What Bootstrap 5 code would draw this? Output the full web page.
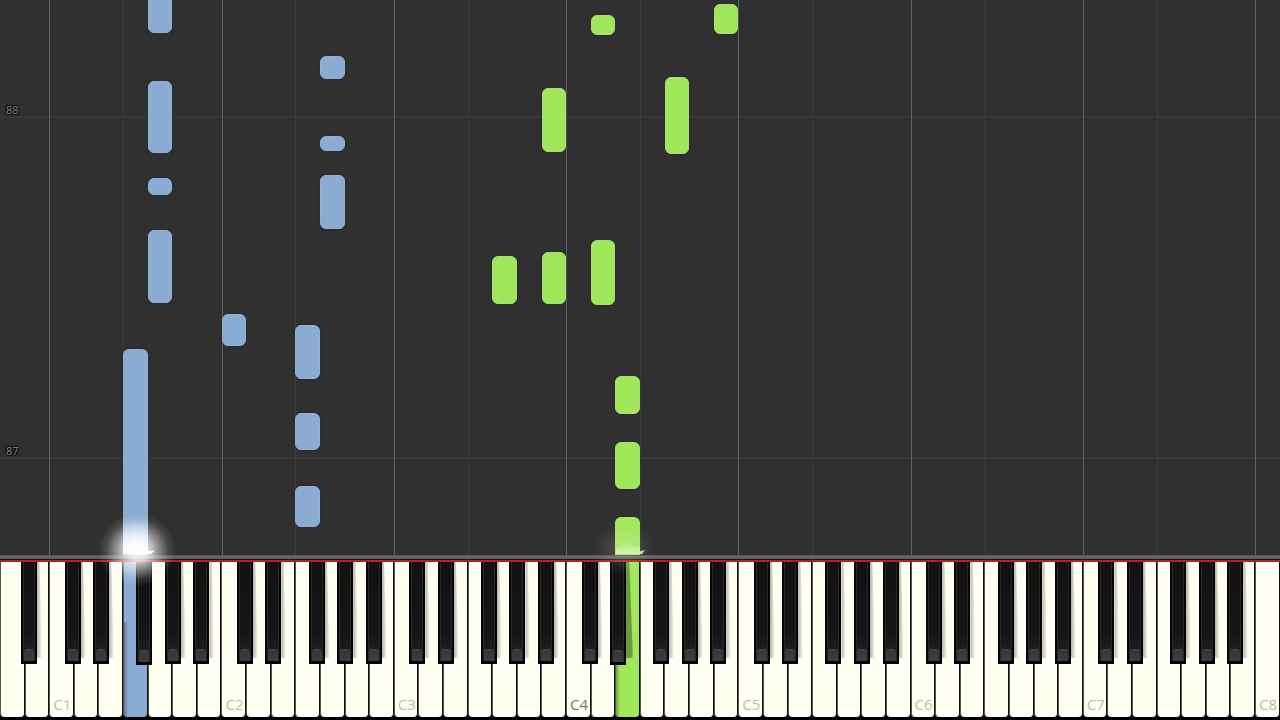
<!DOCTYPE html>
<html lang="en">
<head>
<meta charset="utf-8">
<meta name="viewport" content="width=device-width, initial-scale=1">
<title>Piano roll</title>
<link href="https://cdn.jsdelivr.net/npm/bootstrap@5.3.0/dist/css/bootstrap.min.css" rel="stylesheet">
<style>
  :root { --unit: calc(100% / 52); --left-hand: #8aabd2; --right-hand: #a1e75a; }
  body { background: #303030; font-family: "Open Sans", "Noto Sans", sans-serif; }
  .line-v { position: absolute; top: 0; bottom: 0; width: 1px; left: calc(var(--unit) * var(--key)); background: #3e3e3e; }
  .line-v.octave { background: #646464; }
  .line-h { position: absolute; left: 0; right: 0; height: 2px; bottom: calc(var(--at) * 1px); background: #383838; }
  .measure { position: absolute; left: 6px; bottom: 1px; font-size: 11px; line-height: 14px; color: #8c8c8c;
    text-shadow: 0 0 1px #000, 1px 1px 1px #000, -1px -1px 1px #000, 0 0 2px #000; }
  .note { position: absolute; left: calc(var(--unit) * var(--key)); width: var(--unit);
    bottom: calc(var(--at) * 1px); height: calc(var(--len) * 1px);
    border-radius: 6px; border: 1px solid #97b0cf; background: var(--left-hand); box-shadow: 0 0 2px #1c2430; }
  .note.right { background: var(--right-hand); border-color: #aadd78; box-shadow: 0 0 2px #1f2d14; }
  .note.playing { border-bottom: 0; border-bottom-left-radius: 0; border-bottom-right-radius: 0; }
  .rail { height: 7px; background: linear-gradient(#565656 0 1px, #686868 1px 3px, #555 3px 4px, #1c1c1c 4px 5px, #b81f22 5px 7px); z-index: 2; }
  .keyboard { height: 158px; background: #000; padding-bottom: 3px; }
  .white-key { flex: 1 1 0; border: 0; border-right: 1px solid #111; border-left: 1px solid #55554d;
    border-radius: 0 0 4px 4px; background: #fffff2; padding: 0 0 4px 3px; font-size: 15px; line-height: 17px;
    color: #bcbcb0; text-align: left; white-space: nowrap; min-width: 0; }
  .white-key.middle { color: #77776f; }
  .white-key.pressed-left { background: linear-gradient(90deg, #5f7691, transparent 4px) 0 60px no-repeat, var(--left-hand); }
  .white-key.pressed-right { background: linear-gradient(90deg, #6da03c, transparent 4px) 0 100px no-repeat, var(--right-hand); }
  .black-key { position: absolute; top: 0; height: 102px; width: 16px; margin-left: -8px; padding: 0; border: 0;
    left: calc(var(--unit) * var(--key)); background: #050505; }
  .black-key.low { height: 103px; }
  .black-key::before { content: ""; position: absolute; top: 0; bottom: 3px; left: 2px; right: 2px;
    border: solid #2a2925; border-width: 0 1px; background: linear-gradient(#121212, #151515 70%, #1e1e1e 88%, #2a2a2a); }
  .black-key::after { content: ""; position: absolute; left: 3px; right: 3px; bottom: 3px; height: 12px;
    border-radius: 3px 3px 1px 1px; background: linear-gradient(#444 0 1px, #363636 2px, #3e3e3e); }
  .cast { position: absolute; top: 0; height: 96px; width: 5px; margin-left: 8px; left: calc(var(--unit) * var(--key));
    background: linear-gradient(90deg, #b4b3af, #deded4 60%, transparent); clip-path: polygon(0 0, 50% 0, 100% 100%, 0 100%); }
  .cast.on-right { width: 7px; background: #6a993e; border-radius: 0 0 3px 0; }
  .glow { position: absolute; pointer-events: none; z-index: 3; left: calc(var(--unit) * var(--key)); }
  .glow svg { display: block; overflow: visible; }
</style>
</head>
<body>
<main class="vh-100 d-flex flex-column overflow-hidden position-relative">
  <section id="roll" class="flex-grow-1 position-relative overflow-hidden" aria-label="Notes"></section>
  <div class="rail position-relative"></div>
  <section class="keyboard position-relative" aria-label="Keyboard">
    <div id="whites" class="d-flex h-100"></div>
    <div id="blacks"></div>
    <div class="glow" style="--key:5.5;top:-7px">
      <svg width="1" height="1" aria-hidden="true">
        <defs>
          <radialGradient id="flare"><stop offset="0" stop-color="#fff"/><stop offset=".3" stop-color="#fff" stop-opacity=".8"/><stop offset=".55" stop-color="#fff" stop-opacity=".45"/><stop offset=".8" stop-color="#fff" stop-opacity=".12"/><stop offset="1" stop-color="#fff" stop-opacity="0"/></radialGradient>
          <linearGradient id="wash" x2="0" y2="1"><stop offset="0" stop-color="#fff" stop-opacity="0"/><stop offset="1" stop-color="#fff" stop-opacity=".9"/></linearGradient>
          <linearGradient id="spark" x2="0" y2="1"><stop offset="0" stop-color="#d4f5b2" stop-opacity="0"/><stop offset="1" stop-color="#d4f5b2"/></linearGradient>
        </defs>
        <ellipse cx="2" cy="-5" rx="39" ry="37" fill="url(#flare)"/>
        <rect x="-12" y="-36" width="25" height="35" fill="url(#wash)"/>
        <path d="M12-5 16-4 20-5 16-1H12Z" fill="#fff"/>
      </svg>
    </div>
    <div class="glow" style="--key:25.5;top:-7px">
      <svg width="1" height="1" aria-hidden="true">
        <ellipse cx="-4" cy="-5" rx="34" ry="30" fill="url(#flare)" opacity=".16"/>
        <path d="M-12-1V-9L-9-7-7-12-4-9-1-14 1-9 5-12 7-8 12-10V-4L17-5 14-1Z" fill="url(#spark)"/>
      </svg>
    </div>
  </section>
</main>
<script src="https://cdn.jsdelivr.net/npm/bootstrap@5.3.0/dist/js/bootstrap.bundle.min.js"></script>
<script>
  // [white key index, distance above the keyboard, length]
  const leftNotes = [[6,522,60],[6,402,72],[6,360,17],[6,252,73],[5,0,206],[9,209,32],[12,176,54],[12,105,37],[12,28,41],
    [13,476,23],[13,404,15],[13,326,54]];
  const rightNotes = [[24,520,20],[29,521,30],[22,403,64],[27,401,77],[20,251,48],[22,251,52],[24,250,65],
    [25,141,38],[25,66,47],[25,0,38]];
  const measures = [[87, 96], [88, 437]];
  const roll = document.getElementById('roll');
  const whites = document.getElementById('whites');
  const blacks = document.getElementById('blacks');

  function add(parent, tag, cls, vars = {}) {
    const el = document.createElement(tag);
    el.className = cls;
    for (const name in vars) el.style.setProperty('--' + name, vars[name]);
    parent.append(el);
    return el;
  }

  for (const [number, at] of measures) {
    const line = add(roll, 'div', 'line-h', { at });
    add(line, 'span', 'measure').textContent = number;
  }
  for (let k = 2; k < 52; k++) {
    const step = (k - 2) % 7;
    if (step === 0) add(roll, 'div', 'line-v octave', { key: k });
    if (step === 3) add(roll, 'div', 'line-v', { key: k });
  }
  const addNotes = (list, hand) => list.forEach(([key, at, len]) =>
    add(roll, 'div', 'note ' + hand + (at === 0 ? ' playing' : ''), { key, at, len }));
  addNotes(leftNotes, 'left');
  addNotes(rightNotes, 'right');

  // Offsets of each black key from the seam to its left neighbour, in key widths
  const offsets = { 0: -0.05, 1: 0.1, 3: -0.14, 4: 0.02, 5: 0.18 };
  for (let k = 0; k < 52; k++) {
    const step = (k + 5) % 7, octave = Math.floor((k + 5) / 7);
    const name = 'CDEFGAB'[step] + octave;
    const key = add(whites, 'button', 'white-key d-flex align-items-end' +
      (k === 5 ? ' pressed-left' : k === 25 ? ' pressed-right' : '') + (k === 23 ? ' middle' : ''));
    key.type = 'button';
    key.setAttribute('aria-label', name);
    if (step === 0) key.textContent = name;
    if (step in offsets && k < 51) {
      const at = k + 1 + offsets[step];
      if (k !== 5) add(blacks, 'div', 'cast' + (k === 24 ? ' on-right' : ''), { key: at });
      const black = add(blacks, 'button', 'black-key' + (k === 5 || k === 24 ? ' low' : ''), { key: at });
      black.type = 'button';
      black.setAttribute('aria-label', 'CDEFGAB'[step] + ' sharp ' + octave);
    }
  }
</script>
</body>
</html>
